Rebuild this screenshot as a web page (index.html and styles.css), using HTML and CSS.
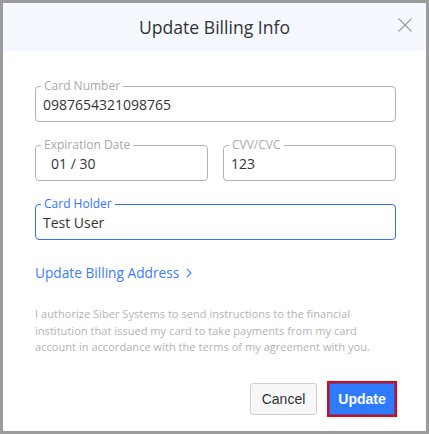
FILE: index.html
```html
<!DOCTYPE html>
<html lang="en">
<head>
<meta charset="utf-8">
<title>Update Billing Info</title>
<link rel="stylesheet" href="styles.css">
</head>
<body>
<div class="dialog">
  <header class="dialog-header">
    <h1 class="dialog-title">Update Billing Info</h1>
    <button class="close" aria-label="Close">
      <svg width="14" height="14" viewBox="0 0 14 14"><path d="M0.5 0.5 L13.5 13.5 M13.5 0.5 L0.5 13.5" stroke="#9a9a9a" stroke-width="1.1" fill="none"/></svg>
    </button>
  </header>
  <div class="dialog-body">
    <fieldset class="field">
      <legend>Card Number</legend>
      <div class="value">0987654321098765</div>
    </fieldset>
    <div class="row">
      <fieldset class="field">
        <legend>Expiration Date</legend>
        <div class="value indent">01 / 30</div>
      </fieldset>
      <fieldset class="field">
        <legend>CVV/CVC</legend>
        <div class="value">123</div>
      </fieldset>
    </div>
    <fieldset class="field focused">
      <legend>Card Holder</legend>
      <div class="value">Test User</div>
    </fieldset>
    <a class="link" href="#">Update Billing Address
      <svg class="chev" width="6" height="10" viewBox="0 0 6 10"><path d="M0.8 0.8 L5 5 L0.8 9.2" stroke="#3a7bfd" stroke-width="1.1" fill="none"/></svg>
    </a>
    <p class="terms">I authorize Siber Systems to send instructions to the financial<br>institution that issued my card to take payments from my card<br>account in accordance with the terms of my agreement with you.</p>
    <div class="actions">
      <button class="btn btn-cancel">Cancel</button>
      <button class="btn btn-primary">Update</button>
    </div>
  </div>
</div>
</body>
</html>
```
FILE: styles.css
```css
html, body {
  margin: 0;
  padding: 0;
  background: #9b9b9b;
}
body {
  font-family: "Open Sans", "Noto Sans", sans-serif;
  color: #333;
}
.dialog {
  margin: 3px;
  width: 423px;
  height: 428px;
  background: #fff;
  display: flex;
  flex-direction: column;
}
.dialog-header {
  height: 48px;
  background: #f5f9ff;
  display: flex;
  align-items: center;
  justify-content: center;
  position: relative;
}
.dialog-title {
  margin: 0;
  font-size: 17.6px;
  font-weight: 400;
  color: #333;
  letter-spacing: 0;
}
.close {
  position: absolute;
  right: 14px;
  top: 15px;
  width: 14px;
  height: 14px;
  padding: 0;
  border: 0;
  background: none;
  display: block;
}
.close svg { display: block; }
.dialog-body {
  padding: 28px 30px 0 32px;
  display: flex;
  flex-direction: column;
}
.field {
  margin: 0;
  padding: 0 7px 6px;
  border: 1px solid #b3b3b3;
  border-radius: 4px;
  min-width: 0;
}
.field legend {
  font-size: 12px;
  line-height: 14px;
  color: #aaa;
  padding: 0 3px;
  margin-left: -2px;
}
.field .value {
  font-size: 14px;
  line-height: 20px;
  padding-top: 2px;
  color: #333;
}
.field .value.indent {
  padding-left: 8px;
}
.field.focused {
  border-color: #3372ff;
}
.field.focused legend {
  color: #3372ff;
}
.row {
  display: grid;
  grid-template-columns: 1fr 1fr;
  column-gap: 15px;
  margin: 16px 0;
}
.link {
  margin-top: 23px;
  font-size: 13.7px;
  line-height: 20px;
  color: #3a7bfd;
  text-decoration: none;
  display: flex;
  align-items: center;
  gap: 7px;
}
.chev { display: block; }
.terms {
  margin: 23px 0 0;
  font-size: 11.1px;
  line-height: 16.5px;
  color: #b3b3b3;
  white-space: nowrap;
}
.actions {
  margin-top: 27px;
  display: flex;
  justify-content: flex-end;
  gap: 12px;
  padding-right: 1px;
}
.btn {
  height: 32px;
  font-family: "Liberation Sans", Arial, sans-serif;
  font-size: 14px;
  border-radius: 3px;
  padding: 0;
}
.btn-cancel {
  width: 67px;
  background: #f7f7f7;
  border: 1px solid #cfcfcf;
  color: #333;
}
.btn-primary {
  width: 66px;
  background: #2f7bff;
  border: 1px solid #1d5fd6;
  color: #fff;
  font-weight: 700;
  border-radius: 0;
  outline: 2px solid #f20000;
}
```
